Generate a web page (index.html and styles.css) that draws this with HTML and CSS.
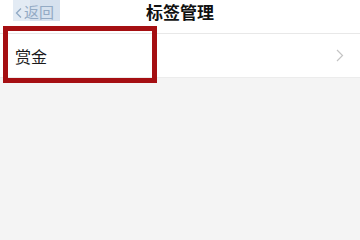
FILE: index.html
```html
<!DOCTYPE html>
<html lang="zh">
<head>
<meta charset="utf-8">
<link rel="stylesheet" href="styles.css">
</head>
<body>
<div class="page">
  <header class="nav">
    <div class="back">
      <svg class="back-icon" width="7" height="10" viewBox="0 0 7 10"><path d="M6 0.5 L1.5 5 L6 9.5" fill="none" stroke="#8fa9c4" stroke-width="1.3"/></svg>
      <span class="back-text">返回</span>
    </div>
    <h1 class="title">标签管理</h1>
  </header>
  <div class="list">
    <div class="row">
      <span class="label">赏金</span>
      <svg class="chev" width="8" height="13" viewBox="0 0 8 13"><path d="M1 1 L6.5 6.5 L1 12" fill="none" stroke="#c4c4c4" stroke-width="1.2"/></svg>
    </div>
  </div>
  <div class="rest"></div>
  <div class="mark"></div>
</div>
</body>
</html>
```
FILE: styles.css
```css
html, body {
  margin: 0;
  padding: 0;
}
body {
  width: 360px;
  height: 240px;
  overflow: hidden;
  background: #f4f4f4;
  font-family: "Noto Sans CJK SC", "Noto Sans", sans-serif;
}
.page {
  position: relative;
  width: 360px;
  height: 240px;
  display: flex;
  flex-direction: column;
}
.nav {
  position: relative;
  height: 33px;
  background: #ffffff;
  border-bottom: 1px solid #e8e8e8;
  display: flex;
  align-items: flex-start;
  justify-content: center;
}
.back {
  position: absolute;
  left: 13px;
  top: 0;
  height: 21px;
  width: 47px;
  background: linear-gradient(90deg, #e3ebf4 0, #e3ebf4 17px, #d6e1ee 17px, #d6e1ee 100%);
  display: flex;
  align-items: flex-end;
  gap: 2px;
  padding-left: 2px;
  box-sizing: border-box;
  overflow: hidden;
}
.back-icon {
  margin-bottom: 3px;
}
.back-text {
  font-size: 15px;
  line-height: 18px;
  color: #93aac4;
  margin-bottom: 0;
}
.title {
  margin: 0;
  margin-top: 1px;
  font-size: 17px;
  line-height: 22px;
  font-weight: 600;
  color: #111111;
}
.list {
  background: #ffffff;
}
.row {
  height: 43px;
  display: flex;
  align-items: center;
  justify-content: space-between;
  padding: 0 15px 0 15px;
  border-bottom: 1px solid #ececec;
}
.label {
  font-size: 16px;
  color: #1a1a1a;
}
.chev {
  margin-right: 1px;
}
.rest {
  flex: 1;
  background: #f4f4f4;
}
.mark {
  position: absolute;
  left: 3px;
  top: 26px;
  width: 154px;
  height: 57px;
  box-sizing: border-box;
  border: 5px solid #a50f12;
}
```
